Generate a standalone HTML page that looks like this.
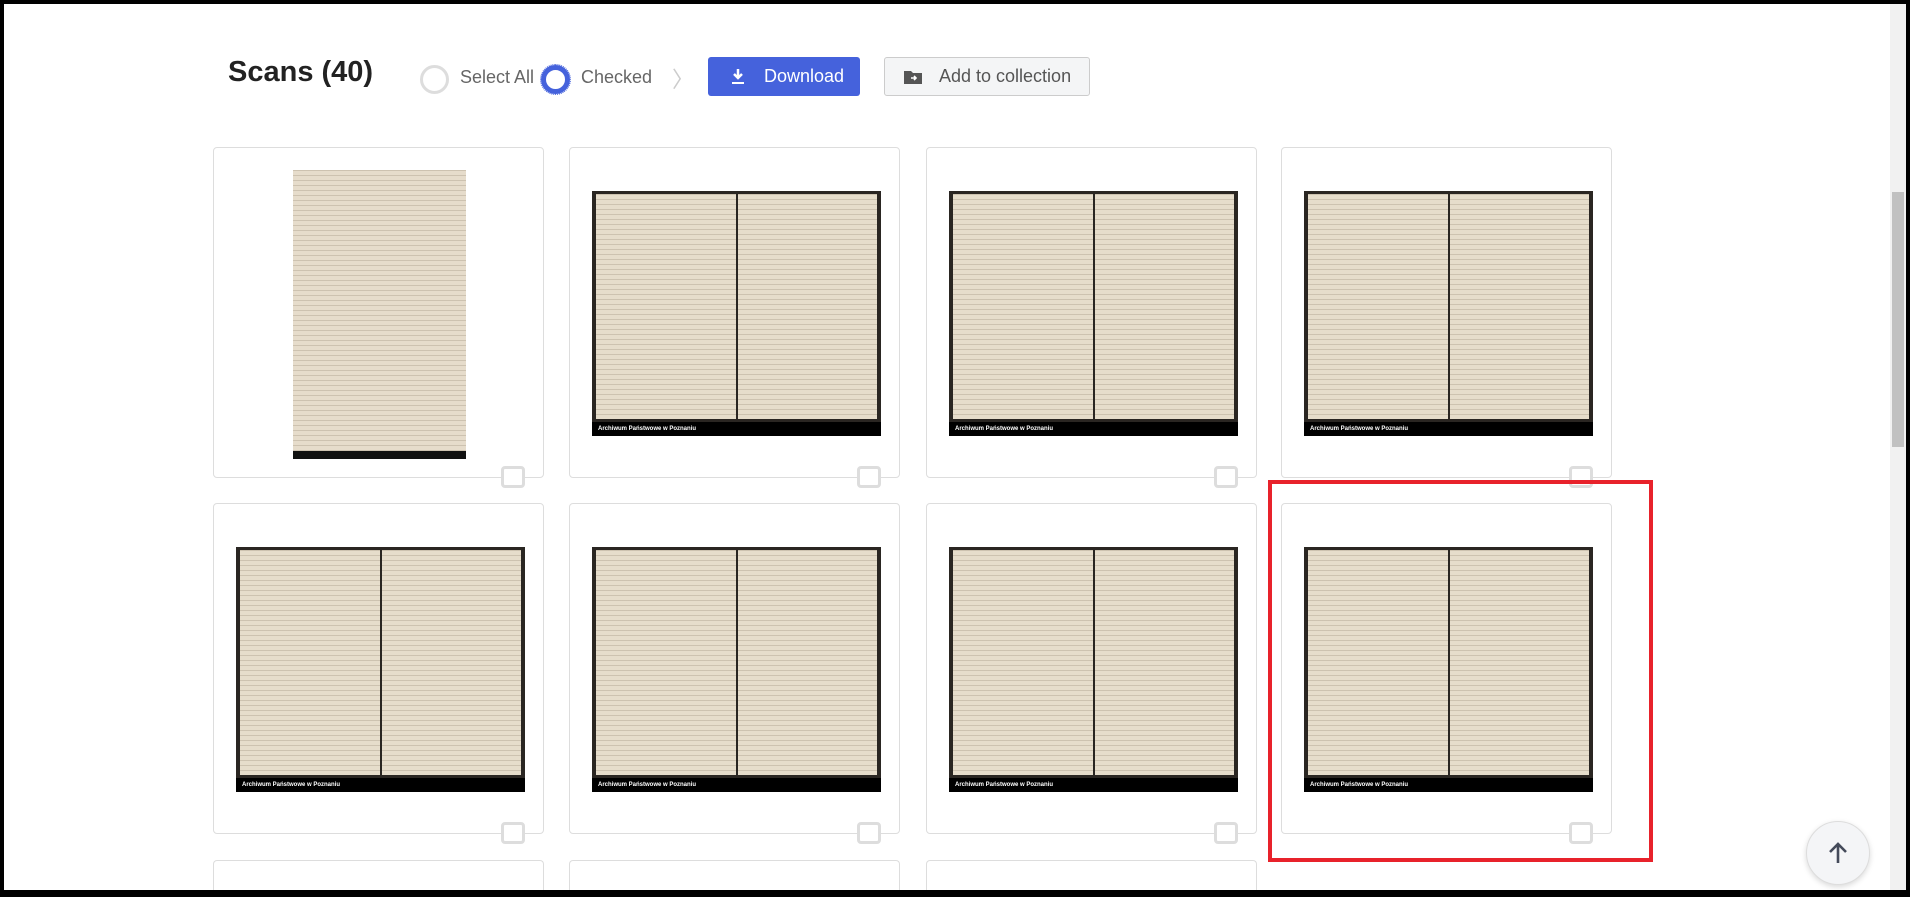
<!DOCTYPE html>
<html><head><meta charset="utf-8"><style>
*{box-sizing:border-box;margin:0;padding:0}
html,body{width:1910px;height:897px;overflow:hidden}
body{background:#fff;font-family:"Liberation Sans",sans-serif}
#w{position:relative;width:1910px;height:897px;overflow:hidden}
.frame{position:absolute;left:0;top:0;width:1910px;height:897px;border:4px solid #000;border-bottom-width:7px;z-index:10;pointer-events:none}
.title{position:absolute;left:228px;top:56px;font-size:29px;font-weight:bold;color:#222}
.radio{position:absolute;top:65px;width:29px;height:29px;border-radius:50%}
.lbl{position:absolute;top:67px;font-size:18px;color:#666}
.btn{position:absolute;top:57px;height:39px;border-radius:3px;font-size:18px;display:flex;align-items:center}
.card{position:absolute;width:331px;height:331px;border:1px solid #ddd;border-radius:4px;background:#fff}
.cb{position:absolute;left:287px;top:318px;width:24px;height:22px;border:3px solid #ddd;border-radius:4px;background:#fff}
.img{position:absolute;left:22px;top:43px;width:289px;height:245px;background:#2a2622;overflow:hidden}
.pg{position:absolute;top:3px;bottom:17px;background:
repeating-linear-gradient(180deg,rgba(90,75,55,.18) 0 1px,transparent 1px 5px),#e6ddcb}
.strip{position:absolute;left:0;right:0;bottom:0;height:14px;background:#000;color:#fff;font-size:6px;font-weight:bold;padding:4px 6px}
.port{position:absolute;left:79px;top:22px;width:173px;height:289px;background:repeating-linear-gradient(180deg,rgba(90,75,55,.18) 0 1px,transparent 1px 5px),#e6dccb}
.short{height:37px;border-bottom:none;border-radius:4px 4px 0 0}
</style></head><body><div id="w">
<div class="frame"></div>
<div class="title">Scans (40)</div>
<div class="radio" style="left:420px;border:3px solid #ddd"></div>
<div class="lbl" style="left:460px">Select All</div>
<div class="radio" style="left:541px;border:5px solid #4562dc;outline:1px dotted #4562dc"></div>
<div class="lbl" style="left:581px">Checked</div>
<div class="lbl" style="left:672px;color:#ccc;font-size:22px;top:62px">〉</div>
<div class="btn" style="left:708px;width:152px;background:#4562dc;color:#fff;padding-left:22px">
<svg width="16" height="18" viewBox="0 0 16 18"><path d="M8 1v9M4 6l4 4 4-4" stroke="#fff" stroke-width="2.5" fill="none"/><rect x="2" y="14" width="12" height="2" fill="#fff"/></svg>
<span style="margin-left:18px">Download</span></div>
<div class="btn" style="left:884px;width:206px;background:#f4f5f6;border:1px solid #ccc;color:#555;padding-left:18px">
<svg width="20" height="16" viewBox="0 0 20 16"><path d="M1 2h7l2 2h9v11H1z" fill="#555"/><path d="M8 9h5M11 7l2 2-2 2" stroke="#fff" stroke-width="1.6" fill="none"/></svg>
<span style="margin-left:16px">Add to collection</span></div>

<div class="card" style="left:213px;top:147px"><div class="port"><div style="position:absolute;bottom:0;left:0;right:0;height:8px;background:#111"></div></div><div class="cb"></div></div>
<div class="card" style="left:569px;top:147px"><div class="img"><div class="pg" style="left:4px;width:140px"></div><div class="pg" style="left:146px;right:4px"></div><div class="strip">Archiwum Państwowe w Poznaniu</div></div><div class="cb"></div></div>
<div class="card" style="left:926px;top:147px"><div class="img"><div class="pg" style="left:4px;width:140px"></div><div class="pg" style="left:146px;right:4px"></div><div class="strip">Archiwum Państwowe w Poznaniu</div></div><div class="cb"></div></div>
<div class="card" style="left:1281px;top:147px"><div class="img"><div class="pg" style="left:4px;width:140px"></div><div class="pg" style="left:146px;right:4px"></div><div class="strip">Archiwum Państwowe w Poznaniu</div></div><div class="cb"></div></div>

<div class="card" style="left:213px;top:503px"><div class="img"><div class="pg" style="left:4px;width:140px"></div><div class="pg" style="left:146px;right:4px"></div><div class="strip">Archiwum Państwowe w Poznaniu</div></div><div class="cb"></div></div>
<div class="card" style="left:569px;top:503px"><div class="img"><div class="pg" style="left:4px;width:140px"></div><div class="pg" style="left:146px;right:4px"></div><div class="strip">Archiwum Państwowe w Poznaniu</div></div><div class="cb"></div></div>
<div class="card" style="left:926px;top:503px"><div class="img"><div class="pg" style="left:4px;width:140px"></div><div class="pg" style="left:146px;right:4px"></div><div class="strip">Archiwum Państwowe w Poznaniu</div></div><div class="cb"></div></div>
<div class="card" style="left:1281px;top:503px"><div class="img"><div class="pg" style="left:4px;width:140px"></div><div class="pg" style="left:146px;right:4px"></div><div class="strip">Archiwum Państwowe w Poznaniu</div></div><div class="cb"></div></div>

<div class="card short" style="left:213px;top:860px"></div>
<div class="card short" style="left:569px;top:860px"></div>
<div class="card short" style="left:926px;top:860px"></div>

<div style="position:absolute;left:1268px;top:480px;width:385px;height:382px;border:4px solid #e8222b"></div>

<div style="position:absolute;left:1890px;top:0;width:16px;height:897px;background:#f1f1f1"></div>
<div style="position:absolute;left:1892px;top:192px;width:12px;height:255px;background:#c1c1c1"></div>

<div style="position:absolute;left:1806px;top:821px;width:64px;height:64px;border-radius:50%;background:#f4f5f7;border:1px solid #ddd;box-shadow:0 2px 6px rgba(0,0,0,.15);display:flex;align-items:center;justify-content:center">
<svg width="22" height="24" viewBox="0 0 22 24"><path d="M11 22V3M3 11l8-8 8 8" stroke="#444a5a" stroke-width="2.6" fill="none"/></svg></div>
</div></body></html>
